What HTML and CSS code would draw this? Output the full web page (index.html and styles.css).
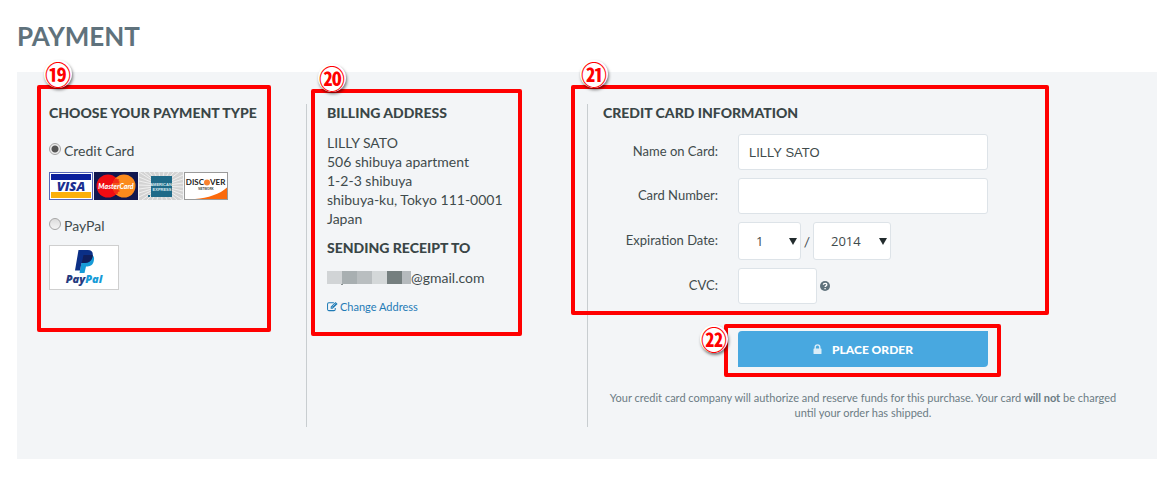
FILE: index.html
```
<!DOCTYPE html>
<html lang="en">
<head>
    <meta charset="UTF-8">
    <meta name="viewport" content="width=device-width, initial-scale=1.0">
    <title>Payment</title>
    <link rel="stylesheet" href="styles.css">
</head>
<body>
    <h1>PAYMENT</h1>
    <form class="panel">
        <section class="column type">
            <div class="callout callout-type"><span class="badge">⑲</span></div>
            <h2>CHOOSE YOUR PAYMENT TYPE</h2>
            <label class="option"><input type="radio" name="payment" checked>Credit Card</label>
            <div class="cards">
                <svg class="card" viewBox="0 0 44 28" role="img" aria-label="Visa">
                    <rect x=".5" y=".5" width="43" height="27" fill="#fff" stroke="#5868b8"/>
                    <rect x="2" y="2" width="40" height="6" fill="#0a1f9c"/>
                    <rect x="2" y="20" width="40" height="6" fill="#fcb00a"/>
                    <text x="22" y="19" class="visa">VISA</text>
                </svg>
                <svg class="card" viewBox="0 0 44 28" role="img" aria-label="MasterCard">
                    <rect width="44" height="28" fill="#11174f"/>
                    <circle cx="14" cy="14" r="11.5" fill="#f00b12"/>
                    <circle cx="30" cy="14" r="11.5" fill="#fb8a1c"/>
                    <path d="M22 5.7a11.5 11.5 0 0 1 0 16.6a11.5 11.5 0 0 1 0-16.6z" fill="#f4531a"/>
                    <path d="M19 8h6M18.500 10h7M18.500 19h7M20 21h4" stroke="#f00b12"/>
                    <text x="22" y="17" class="mastercard">MasterCard</text>
                </svg>
                <svg class="card" viewBox="0 0 44 28" role="img" aria-label="American Express">
                    <rect width="44" height="28" fill="#d3d3d3"/>
                    <path d="M22 14L0 0M22 14L5 0M22 14L10 0M22 14L15 0M22 14L20 0M22 14L25 0M22 14L30 0M22 14L35 0M22 14L40 0M22 14L44 3M22 14L44 7M22 14L44 11M22 14L44 15M22 14L44 19M22 14L44 23M22 14L44 28M22 14L38 28M22 14L33 28M22 14L28 28M22 14L23 28M22 14L18 28M22 14L13 28M22 14L8 28M22 14L3 28M22 14L0 25M22 14L0 21M22 14L0 17M22 14L0 13M22 14L0 9M22 14L0 5" stroke="#efefef"/>
                    <rect x="12" y="4" width="21" height="21" fill="#1f6a88"/>
                    <rect x="9" y="23" width="2" height="2" fill="#1f6a88"/>
                    <text x="22" y="14" class="amex">AMERICAN</text>
                    <text x="23" y="19" class="amex">EXPRESS</text>
                </svg>
                <svg class="card" viewBox="0 0 44 28" role="img" aria-label="Discover">
                    <rect x=".5" y=".5" width="43" height="27" fill="#fff" stroke="#9a9a9a"/>
                    <path d="M43 15.500V27H11C24 26 36 22 43 15.500z" fill="#fb6a0c"/>
                    <circle cx="23" cy="10.500" r="3" fill="#f98230"/>
                    <text x="20" y="13" class="discover start">DISC</text>
                    <text x="26" y="13" class="discover">VER</text>
                    <text x="22" y="18" class="network">NETWORK</text>
                </svg>
            </div>
            <label class="option"><input type="radio" name="payment">PayPal</label>
            <svg class="paypal" viewBox="0 0 70 45" role="img" aria-label="PayPal">
                <rect x=".5" y=".5" width="69" height="44" fill="#fff" stroke="#cfcfcf"/>
                <path d="M34 10h9c2.500 1.500 2.500 4 1.500 7-1.200 3.500-3.500 4.500-7.500 4.500l-1.500 6.500h-5z" fill="#179bd7"/>
                <path d="M29.500 5h9.500c4 0 5.500 2.500 4.500 6.500-1 4.500-4 6.500-8.500 6.500h-2.500l-1.500 7.500h-5z" fill="#0b2f86"/>
                <path d="M34.500 10h9.200c0 4.500-3.200 8-8.700 8h-2.200z" fill="#101f5c"/>
                <text x="35" y="38" class="paypal-name">Pay<tspan fill="#179bd7">Pal</tspan></text>
            </svg>
        </section>

        <section class="column billing">
            <div class="callout callout-billing"><span class="badge">⑳</span></div>
            <h2>BILLING ADDRESS</h2>
            <address>
                LILLY SATO<br>
                506 shibuya apartment<br>
                1-2-3 shibuya<br>
                shibuya-ku, Tokyo 111-0001<br>
                Japan
            </address>
            <h2>SENDING RECEIPT TO</h2>
            <p class="email">
                <svg class="mask" viewBox="0 0 84 14" aria-hidden="true">
                    <rect width="15" height="13" fill="#d1d4d6"/>
                    <rect x="15" width="15" height="13" fill="#a8afb1"/>
                    <rect x="30" width="15" height="13" fill="#b9bec0"/>
                    <rect x="45" width="15" height="13" fill="#d4d8d9"/>
                    <rect x="60" width="15" height="13" fill="#757f7f"/>
                    <rect x="75" width="9" height="13" fill="#b5babd"/>
                    <rect x="14" y="13" width="2" height="1" fill="#8a9292"/>
                </svg>@gmail.com
            </p>
            <a class="change" href="#">
                <svg viewBox="0 0 12 11" aria-hidden="true">
                    <path d="M7.500 1.500H2A1.500 1.500 0 0 0 .6 3v5.500A1.500 1.500 0 0 0 2 10h5.500A1.500 1.500 0 0 0 9 8.500V7" fill="none" stroke="currentColor" stroke-width="1.100"/>
                    <path d="M4 8V5.800L9.300.5l2.200 2.200L6.200 8z" fill="currentColor"/>
                    <path d="M5 6l1 1M6 5.500l3.300-3.300" stroke="#f3f5f7" stroke-width=".6"/>
                </svg>
                Change Address
            </a>
        </section>

        <section class="column credit">
            <div class="callout callout-credit"><span class="badge">㉑</span></div>
            <h2>CREDIT CARD INFORMATION</h2>
            <div class="fields">
                <label for="name">Name on Card:</label>
                <input type="text" id="name" value="LILLY SATO">

                <label for="number">Card Number:</label>
                <input type="text" id="number">

                <label for="month">Expiration Date:</label>
                <div class="expiry">
                    <span class="select month"><select id="month"><option>1</option></select></span>
                    <span class="slash">/</span>
                    <span class="select year"><select id="year" aria-label="Expiration year"><option>2014</option></select></span>
                </div>

                <label for="cvc">CVC:</label>
                <div class="cvc">
                    <input type="text" id="cvc">
                    <svg class="help" viewBox="0 0 10 10" role="img" aria-label="Help">
                        <circle cx="5" cy="5" r="5" fill="#5f727c"/>
                        <path d="M3.300 3.800C3.400 1.800 6.800 1.800 6.800 3.700 6.800 4.900 5.100 4.800 5.100 6.100M5.100 7v1.200" fill="none" stroke="#fff" stroke-width="1.300"/>
                    </svg>
                </div>
            </div>
            <div class="submit">
                <div class="callout callout-order"><span class="badge">㉒</span></div>
                <button type="button">
                    <svg viewBox="0 0 8 10" aria-hidden="true">
                        <rect y="4.500" width="8" height="5.500" rx=".6" fill="currentColor"/>
                        <path d="M1.700 5V3.200a2.300 2.300 0 0 1 4.600 0V5" fill="none" stroke="currentColor" stroke-width="1.400"/>
                    </svg>
                    PLACE ORDER
                </button>
            </div>
            <p class="note">Your credit card company will authorize and reserve funds for this purchase. Your card <strong>will not</strong> be charged until your order has shipped.</p>
        </section>
    </form>
</body>
</html>
```
FILE: styles.css
```
* {
    box-sizing: border-box;
}
body {
    margin: 0;
    padding: 20px 16px 36px 17px;
    background: #fff;
    color: #3f4b4c;
    font-family: Lato, "Liberation Sans", sans-serif;
    font-size: 14px;
    line-height: 19px;
}
h1 {
    margin: 0 0 20px;
    color: #5f727c;
    font-size: 26px;
    line-height: 32px;
    font-weight: bold;
}
h2 {
    margin: 0 0 11px;
    color: #3a4647;
    font-size: 14px;
    line-height: 18px;
    font-weight: 900;
    white-space: nowrap;
}
.panel {
    display: grid;
    grid-template-columns: 289fr 281fr 570fr;
    padding: 32px 0;
    background: #f3f5f7;
}
.column {
    position: relative;
}
.type {
    padding-left: 32px;
}
.type h2 {
    margin-bottom: 19px;
}
.billing {
    border-left: 1px solid #c8cdd0;
    padding-left: 20px;
}
.credit {
    border-left: 1px solid #c8cdd0;
    padding: 0 34px 7px 15px;
}
.credit h2 {
    margin-bottom: 12px;
}

/* numbered markers */
.callout {
    position: absolute;
    border: 4px solid #f00;
    border-radius: 2px;
    pointer-events: none;
}
.callout-type {
    top: -19px;
    left: 20px;
    width: 234px;
    height: 247px;
}
.callout-billing {
    top: -15px;
    left: 4px;
    width: 211px;
    height: 247px;
}
.callout-credit {
    top: -19px;
    left: -17px;
    width: 478px;
    height: 230px;
}
.callout-order {
    top: -7px;
    left: -14px;
    width: 277px;
    height: 53px;
}
.badge {
    position: absolute;
    top: -29px;
    left: 3px;
    width: 28px;
    height: 28px;
    border-radius: 50%;
    background: #fff;
    box-shadow: 1px 2px 3px rgba(0, 0, 0, 0.5);
    color: #f00;
    font-family: "Noto Sans CJK JP", sans-serif;
    font-size: 26px;
    font-weight: bold;
    line-height: 28px;
    text-align: center;
}
.callout-credit .badge {
    left: 5px;
}
.callout-order .badge {
    top: -3px;
    left: -28px;
}

.option {
    display: flex;
    align-items: center;
    gap: 3px;
    margin-top: 16px;
    line-height: 20px;
}
.option input {
    appearance: none;
    width: 12px;
    height: 12px;
    margin: 0 0 4px;
    border: 1px solid #a5a5a5;
    border-radius: 50%;
    background: linear-gradient(#dcdcdc, #f4f4f4);
}
.option input:checked {
    background: radial-gradient(circle, #555 0 3px, #eee 4px);
}
.cards {
    display: flex;
    gap: 1px;
    margin: 11px 0 16px;
}
.card {
    width: 44px;
    height: 28px;
}
.visa {
    fill: #1c2f91;
    font: italic 800 13px "Open Sans", sans-serif;
    text-anchor: middle;
}
.mastercard {
    fill: #fff;
    font: italic 900 7px Lato, sans-serif;
    text-anchor: middle;
}
.amex {
    fill: #dcebf0;
    font: bold 4px "Liberation Sans", sans-serif;
    text-anchor: middle;
}
.discover {
    fill: #222;
    font: bold 8px Lato, sans-serif;
}
.start {
    text-anchor: end;
}
.network {
    fill: #444;
    font: bold 3px "Liberation Sans", sans-serif;
    text-anchor: middle;
}
.paypal {
    display: block;
    width: 70px;
    height: 45px;
    margin-top: 9px;
}
.paypal-name {
    fill: #253b80;
    font: italic 800 11px "Open Sans", sans-serif;
    text-anchor: middle;
}

address {
    margin-bottom: 11px;
    font-style: normal;
}
.email {
    display: flex;
    align-items: center;
    margin: 0 0 10px;
}
.mask {
    width: 84px;
    height: 14px;
}
.change {
    display: inline-flex;
    align-items: center;
    gap: 2px;
    color: #1f7bb6;
    font-size: 11px;
    text-decoration: none;
}
.change svg {
    width: 11px;
    height: 11px;
}

.fields {
    display: grid;
    grid-template-columns: 115px 250px;
    gap: 8px 20px;
    align-items: center;
}
.fields label {
    padding-bottom: 2px;
    font-size: 13px;
    text-align: right;
}
input[type="text"], select {
    width: 100%;
    height: 36px;
    border: 1px solid #dde3e8;
    border-radius: 3px;
    padding: 0 10px;
    background: #fff;
    color: #3f4b4c;
    font-family: "Liberation Sans", Arial, sans-serif;
    font-size: 13px;
}
.expiry, .cvc {
    display: flex;
    align-items: center;
}
.slash {
    width: 12px;
    text-align: center;
}
.select {
    position: relative;
}
.select::after {
    content: "";
    position: absolute;
    top: 16px;
    right: 4px;
    border: 4px solid transparent;
    border-top: 7px solid #222b2d;
    border-bottom: 0;
}
.select select {
    display: block;
    appearance: none;
    height: 38px;
    padding: 0 17px;
    font-family: "Open Sans", sans-serif;
    font-size: 13px;
}
.month {
    width: 63px;
}
.year {
    width: 78px;
}
.cvc {
    gap: 3px;
}
.cvc input {
    width: 79px;
}
.help {
    width: 10px;
    height: 10px;
}
.submit {
    position: relative;
    width: 250px;
    margin: 27px 0 23px 135px;
}
button {
    display: flex;
    justify-content: center;
    align-items: center;
    gap: 10px;
    width: 100%;
    height: 36px;
    border: none;
    border-radius: 4px 0;
    background: #48a8e0;
    color: #fff;
    font-family: Lato, sans-serif;
    font-size: 12px;
    font-weight: 900;
    cursor: pointer;
}
button svg {
    width: 9px;
    height: 10px;
    opacity: 0.8;
}
.note {
    margin: 0;
    color: #6c7c84;
    font-size: 11px;
    line-height: 15px;
    text-align: center;
}
```
